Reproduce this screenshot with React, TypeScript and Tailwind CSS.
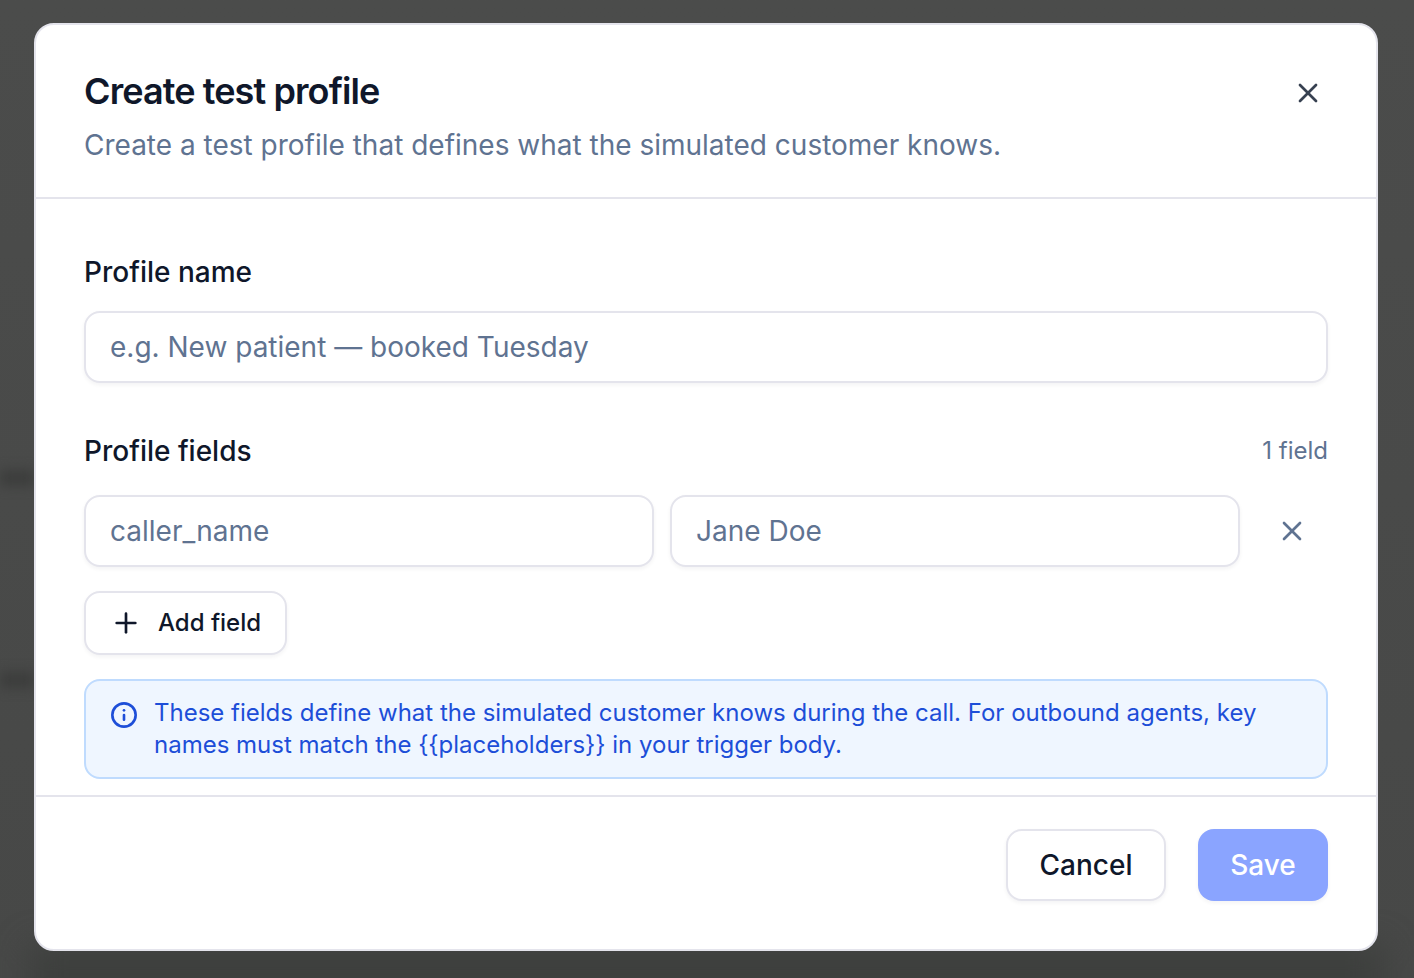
import { Info, Plus, X } from "lucide-react";

const inputClass =
  "h-[72px] w-full rounded-2xl border-2 border-[#e4e4ec] bg-white px-6 text-[28px] text-[#0f172a] shadow-[0_2px_4px_rgba(15,23,42,0.05)] outline-none placeholder:text-[#5f7391]";

export default function App() {
  return (
    <div className="relative flex h-[978px] w-full items-start overflow-hidden bg-gradient-to-b from-[#4b4c4b] to-[#474847] pt-[23px] pl-[34px] font-['Inter',sans-serif]">
      {/* blurred page behind the overlay */}
      <div className="absolute top-[470px] left-0 h-4 w-[34px] bg-[#3c3d3c] blur-[6px]" />
      <div className="absolute top-[672px] left-0 h-4 w-[34px] bg-[#3c3d3c] blur-[6px]" />
      <div className="absolute -bottom-6 left-[30px] h-14 w-[1354px] bg-[#3d3f3d] blur-[16px]" />

      <div className="relative flex h-[928px] w-[1344px] flex-col overflow-hidden rounded-[20px] border-2 border-[#e4e4ec] bg-white">
        <div className="relative h-[174px] shrink-0 border-b-2 border-[#e4e4ec] px-12 pt-[44px]">
          <h2 className="text-[36px] leading-[44px] font-semibold tracking-[-0.9px] text-[#0f172a]">Create test profile</h2>
          <p className="mt-3 text-[28px] leading-[40px] text-[#5f7391]">
            Create a test profile that defines what the simulated customer knows.
          </p>
          <button className="absolute top-[52px] right-[52px] text-[#374151]">
            <X size={32} strokeWidth={2} />
          </button>
        </div>

        <div className="min-h-0 flex-1 overflow-hidden px-12 pt-[53px]">
          <label className="block text-[28px] leading-[40px] font-medium text-[#0f172a]">Profile name</label>
          <input className={`${inputClass} mt-[19px]`} placeholder="e.g. New patient — booked Tuesday" />

          <div className="mt-12 flex items-center justify-between">
            <label className="text-[28px] leading-[40px] font-medium text-[#0f172a]">Profile fields</label>
            <span className="text-[24px] leading-[40px] text-[#5f7391]">1 field</span>
          </div>

          <div className="mt-6 flex items-center gap-4">
            <input className={inputClass} placeholder="caller_name" />
            <input className={inputClass} placeholder="Jane Doe" />
            <button className="flex h-[72px] w-[72px] shrink-0 items-center justify-center text-[#5f7391]">
              <X size={32} strokeWidth={2} />
            </button>
          </div>

          <button className="mt-6 flex h-16 w-[203px] items-center gap-4 rounded-2xl border-2 border-[#e4e4ec] bg-white pl-6 text-[24px] font-medium text-[#0f172a] shadow-[0_2px_4px_rgba(15,23,42,0.05)]">
            <Plus size={32} strokeWidth={2} />
            Add field
          </button>

          <div className="mt-6 flex h-[100px] gap-4 rounded-2xl border-2 border-[#bfdbfe] bg-[#eff6ff] px-6 pt-4 text-[24px] leading-[32px] text-[#1d4ed8]">
            <Info size={28} strokeWidth={2.25} className="mt-[4px] shrink-0" />
            <p>
              These fields define what the simulated customer knows during the call. For outbound agents, key names must match the {"{{placeholders}}"} in your trigger body.
            </p>
          </div>
        </div>

        <div className="flex h-[154px] shrink-0 items-start justify-end gap-8 border-t-2 border-[#e4e4ec] px-12 pt-8">
          <button className="h-[72px] w-[160px] rounded-2xl border-2 border-[#e4e4ec] bg-white text-[28px] font-medium text-[#0f172a] shadow-[0_2px_4px_rgba(15,23,42,0.05)]">
            Cancel
          </button>
          <button className="h-[72px] w-[130px] rounded-2xl bg-[#8aa4ff] text-[28px] font-medium text-white shadow-[0_2px_4px_rgba(15,23,42,0.05)]">
            Save
          </button>
        </div>
      </div>
    </div>
  );
}
